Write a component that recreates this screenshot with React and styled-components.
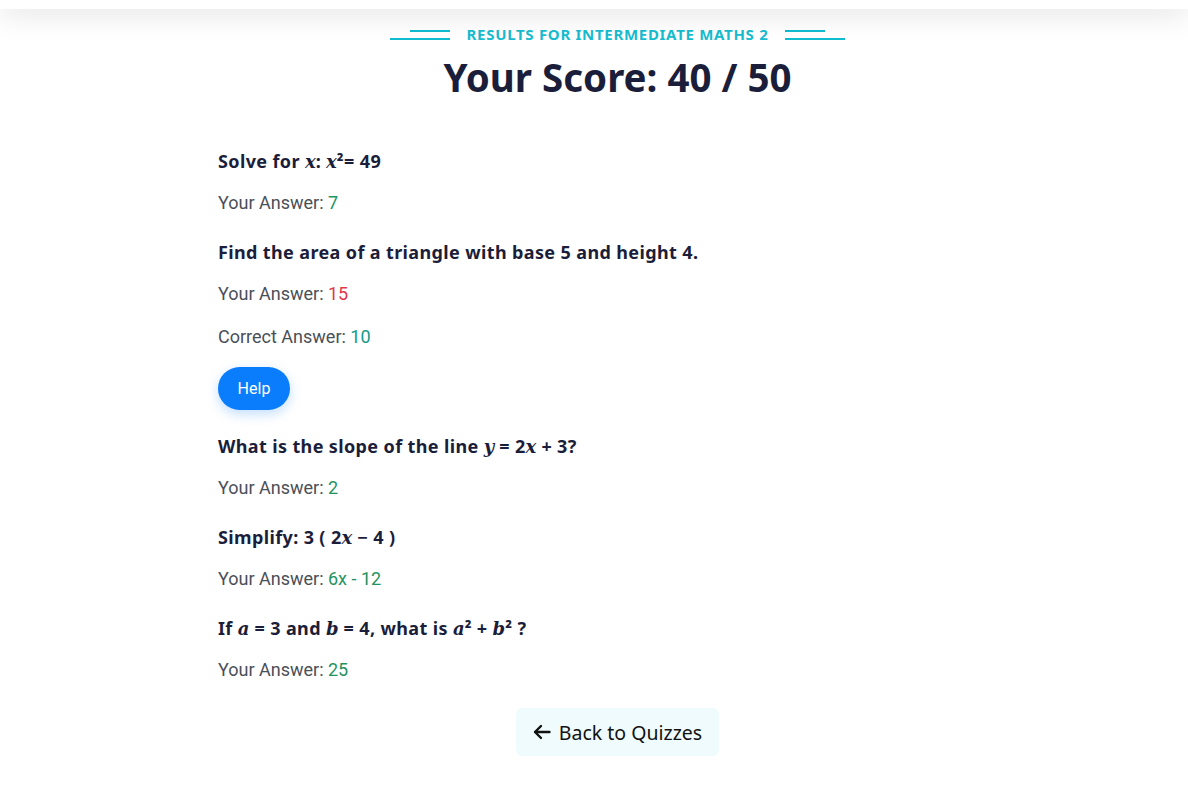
import React from "react";
import styled, { createGlobalStyle } from "styled-components";

const Global = createGlobalStyle`
  html, body { margin: 0; padding: 0; background: #fff; }
  body { font-family: "Nunito", "Noto Sans", sans-serif; }
`;

const TopBar = styled.div`
  height: 9px;
  background: #fff;
  box-shadow: 0 0 30px rgba(0, 0, 0, 0.26);
  position: relative;
  z-index: 1;
`;

const Page = styled.main`
  display: flex;
  flex-direction: column;
  align-items: center;
  padding: 14px 0 40px 47px;
`;

const Eyebrow = styled.div`
  display: flex;
  align-items: center;
  gap: 17px;
  color: #17bccf;
  font-family: "Noto Sans", sans-serif;
  font-weight: 700;
  font-size: 15px;
  letter-spacing: 0.7px;
  text-transform: uppercase;
  height: 22px;
`;

const Lines = styled.span`
  display: flex;
  flex-direction: column;
  align-items: ${(p) => (p.$side === "left" ? "flex-end" : "flex-start")};
  gap: 6px;
  width: 60px;
  margin-top: 2px;
  & > i {
    display: block;
    height: 2px;
    background: #10bcd0;
  }
  & > i:first-child { width: 40px; }
  & > i:last-child { width: 60px; }
`;

const Title = styled.h1`
  margin: 6px 0 0;
  font-family: "Noto Sans", sans-serif;
  font-weight: 700;
  font-size: 38.5px;
  color: #1b1e3a;
  line-height: 52px;
`;

const List = styled.section`
  align-self: flex-start;
  margin-left: 171px;
  margin-top: 46px;
  display: flex;
  flex-direction: column;
`;

const Question = styled.h3`
  margin: 0;
  font-family: "Noto Sans", sans-serif;
  font-weight: 700;
  font-size: 18px;
  letter-spacing: 0.37px;
  line-height: 24px;
  height: 24px;
  color: #1b1e3a;
`;

const M = styled.span`
  font-family: "DejaVu Serif", "Liberation Serif", serif;
  font-style: italic;
  font-weight: 700;
  font-size: 18px;
  line-height: 0;
  letter-spacing: 0;
`;

const Answer = styled.p`
  margin: ${(p) => p.$mt ?? 18}px 0 0;
  font-family: Roboto, sans-serif;
  font-size: 18px;
  line-height: 24px;
  color: #4b4f58;
`;

const Val = styled.span`
  color: ${(p) => (p.$tone === "bad" ? "#e0384a" : p.$tone === "teal" ? "#129a88" : "#1f9361")};
`;

const Block = styled.div`
  margin-top: ${(p) => p.$gap ?? 25}px;
`;

const HelpButton = styled.button`
  margin-top: 18px;
  width: 72px;
  height: 43px;
  border: none;
  border-radius: 22px;
  background: #0a7dfc;
  color: #fff;
  font-family: Roboto, sans-serif;
  font-size: 16px;
  box-shadow: 0 4px 12px rgba(10, 125, 252, 0.25);
  cursor: pointer;
`;

const Back = styled.button`
  margin-top: 26px;
  width: 203px;
  height: 48px;
  border: none;
  border-radius: 6px;
  background: #effbfc;
  color: #111;
  font-family: "Noto Sans", sans-serif;
  font-size: 19.5px;
  display: flex;
  align-items: center;
  justify-content: center;
  gap: 8px;
  cursor: pointer;
`;

export default function App() {
  return (
    <>
      <Global />
      <TopBar />
      <Page>
        <Eyebrow>
          <Lines $side="left"><i /><i /></Lines>
          <span>Results for Intermediate Maths 2</span>
          <Lines $side="right"><i /><i /></Lines>
        </Eyebrow>
        <Title>Your Score: 40 / 50</Title>
        <List>
          <Block $gap={0}>
            <Question>Solve for <M>x</M>: <M>x</M>²= 49</Question>
            <Answer>Your Answer: <Val>7</Val></Answer>
          </Block>
          <Block>
            <Question>Find the area of a triangle with base 5 and height 4.</Question>
            <Answer>Your Answer: <Val $tone="bad">15</Val></Answer>
            <Answer $mt={19}>Correct Answer: <Val $tone="teal">10</Val></Answer>
            <HelpButton>Help</HelpButton>
          </Block>
          <Block $gap={24}>
            <Question>What is the slope of the line <M>y</M> = 2<M>x</M> + 3?</Question>
            <Answer>Your Answer: <Val>2</Val></Answer>
          </Block>
          <Block>
            <Question>Simplify: 3 ( 2<M>x</M> − 4 )</Question>
            <Answer>Your Answer: <Val>6x - 12</Val></Answer>
          </Block>
          <Block>
            <Question>If <M>a</M> = 3 and <M>b</M> = 4, what is <M>a</M>² + <M>b</M>² ?</Question>
            <Answer>Your Answer: <Val>25</Val></Answer>
          </Block>
        </List>
        <Back>
          <svg width="18" height="16" viewBox="0 0 18 16" fill="none" stroke="#111" strokeWidth="2.4" strokeLinecap="round" strokeLinejoin="round">
            <path d="M16.5 8H2M8 2 2 8l6 6" />
          </svg>
          Back to Quizzes
        </Back>
      </Page>
    </>
  );
}
